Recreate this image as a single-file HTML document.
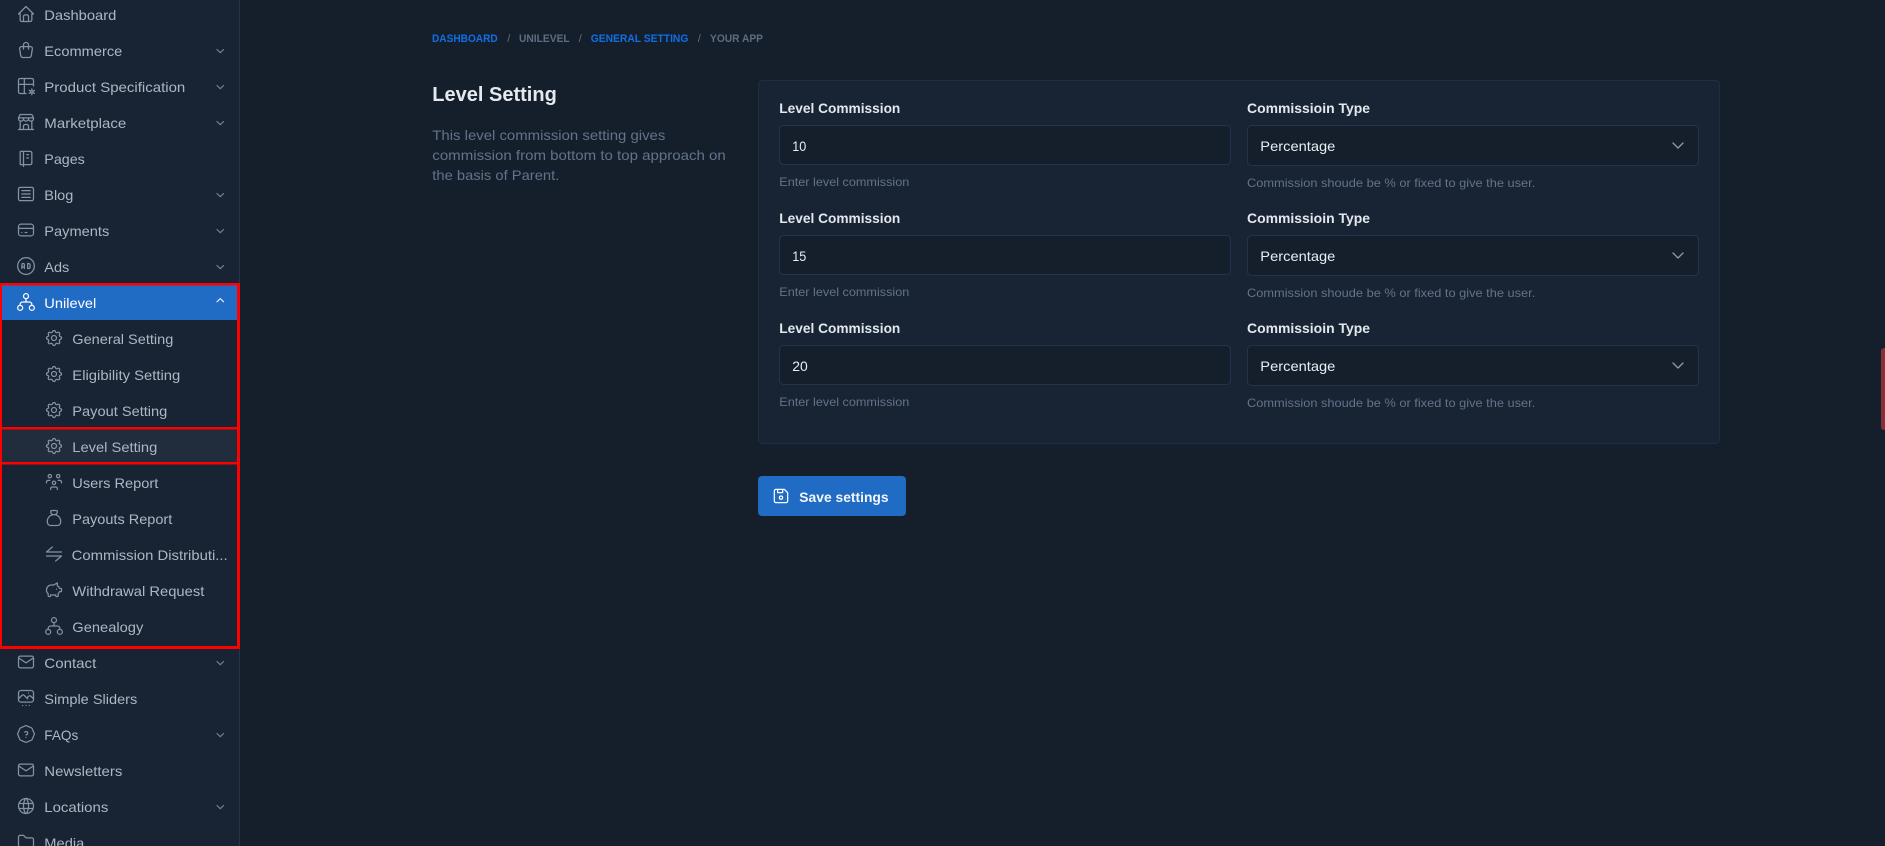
<!DOCTYPE html>
<html lang="en"><head><meta charset="utf-8"><title>Level Setting</title>
<style>
html,body{margin:0;padding:0;background:#151f2c;width:1885px;height:846px;overflow:hidden}
svg{display:block}
text{font-family:"Liberation Sans",sans-serif;white-space:pre}
.s{font-size:14px;fill:#adb7c3}
.w{fill:#fff}
.l{font-size:14px;font-weight:700;fill:#e2e8ee}
.h{font-size:12px;fill:#64728a}
.v{font-size:14px;fill:#e8edf3}
.d{font-size:14px;fill:#64728a}
.b{font-size:11px;font-weight:700}
.i{color:#8492a3}
.c{fill:none;stroke:#748296;stroke-width:1.2;stroke-linecap:round;stroke-linejoin:round}
symbol{fill:none;stroke:currentColor;stroke-width:1.5;stroke-linecap:round;stroke-linejoin:round;overflow:visible}
</style></head><body>
<svg xmlns="http://www.w3.org/2000/svg" width="1885" height="846" viewBox="0 0 1885 846">
<defs>
<symbol id="home" viewBox="0 0 24 24"><path d="M5 12l-2 0l9 -9l9 9l-2 0M5 12v7a2 2 0 0 0 2 2h10a2 2 0 0 0 2 -2v-7M9 21v-6a2 2 0 0 1 2 -2h2a2 2 0 0 1 2 2v6"/></symbol>
<symbol id="bag" viewBox="0 0 24 24"><path d="M6.331 8h11.339a2 2 0 0 1 1.977 2.304l-1.255 8.152a3 3 0 0 1 -2.966 2.544h-6.852a3 3 0 0 1 -2.965 -2.544l-1.255 -8.152a2 2 0 0 1 1.977 -2.304zM9 11v-5a3 3 0 0 1 6 0v5"/></symbol>
<symbol id="tbl" viewBox="0 0 24 24"><path d="M12 21h-7a2 2 0 0 1 -2 -2v-14a2 2 0 0 1 2 -2h14a2 2 0 0 1 2 2v7M3 10h18M10 3v18"/><circle cx="19" cy="19" r="1.4"/><path d="M19 15.5v1.6M19 20.9v1.6M15.9 17.2l1.5 .9M20.6 19.9l1.5 .9M15.9 20.8l1.5 -.9M20.6 18.1l1.5 -.9"/></symbol>
<symbol id="store" viewBox="0 0 24 24"><path d="M3 21l18 0M3 7v1a3 3 0 0 0 6 0v-1m0 1a3 3 0 0 0 6 0v-1m0 1a3 3 0 0 0 6 0v-1h-18l2 -4h14l2 4M5 21l0 -10.15M19 21l0 -10.15M9 21v-4a2 2 0 0 1 2 -2h2a2 2 0 0 1 2 2v4"/></symbol>
<symbol id="note" viewBox="0 0 24 24"><path d="M6 4h11a2 2 0 0 1 2 2v12a2 2 0 0 1 -2 2h-11a1 1 0 0 1 -1 -1v-14a1 1 0 0 1 1 -1m3 0v18M13 8l2 0M13 12l2 0"/></symbol>
<symbol id="art" viewBox="0 0 24 24"><path d="M3 6a2 2 0 0 1 2 -2h14a2 2 0 0 1 2 2v12a2 2 0 0 1 -2 2h-14a2 2 0 0 1 -2 -2zM7 8h10M7 12h10M7 16h10"/></symbol>
<symbol id="card" viewBox="0 0 24 24"><path d="M3 8a3 3 0 0 1 3 -3h12a3 3 0 0 1 3 3v8a3 3 0 0 1 -3 3h-12a3 3 0 0 1 -3 -3zM3 10h18M7 15h.01M11 15h2"/></symbol>
<symbol id="ad" viewBox="0 0 24 24"><circle cx="12" cy="12" r="10"/><path d="M7 15v-4.5a1.5 1.5 0 0 1 3 0v4.5M7 13h3M14 9v6h1a2 2 0 0 0 2 -2v-2a2 2 0 0 0 -2 -2h-1z"/></symbol>
<symbol id="hier" viewBox="0 0 24 24"><circle cx="12" cy="5" r="3"/><circle cx="5" cy="19" r="3"/><circle cx="19" cy="19" r="3"/><path d="M12 8v4M5 16v-1a3 3 0 0 1 3 -3h8a3 3 0 0 1 3 3v1"/></symbol>
<symbol id="gear" viewBox="0 0 24 24"><path d="M10.325 4.317c.426 -1.756 2.924 -1.756 3.35 0a1.724 1.724 0 0 0 2.573 1.066c1.543 -.94 3.31 .826 2.37 2.37a1.724 1.724 0 0 0 1.065 2.572c1.756 .426 1.756 2.924 0 3.35a1.724 1.724 0 0 0 -1.066 2.573c.94 1.543 -.826 3.31 -2.37 2.37a1.724 1.724 0 0 0 -2.572 1.065c-.426 1.756 -2.924 1.756 -3.35 0a1.724 1.724 0 0 0 -2.573 -1.066c-1.543 .94 -3.31 -.826 -2.37 -2.37a1.724 1.724 0 0 0 -1.065 -2.572c-1.756 -.426 -1.756 -2.924 0 -3.35a1.724 1.724 0 0 0 1.066 -2.573c-.94 -1.543 .826 -3.31 2.37 -2.37c1 .608 2.296 .07 2.572 -1.065zM9 12a3 3 0 1 0 6 0a3 3 0 0 0 -6 0"/></symbol>
<symbol id="users" viewBox="0 0 24 24"><path d="M10 13a2 2 0 1 0 4 0a2 2 0 0 0 -4 0M8 21v-1a2 2 0 0 1 2 -2h4a2 2 0 0 1 2 2v1M15 5a2 2 0 1 0 4 0a2 2 0 0 0 -4 0M17 10h2a2 2 0 0 1 2 2v1M5 5a2 2 0 1 0 4 0a2 2 0 0 0 -4 0M3 13v-1a2 2 0 0 1 2 -2h2"/></symbol>
<symbol id="money" viewBox="0 0 24 24"><path d="M9.5 3h5a1.5 1.5 0 0 1 1.5 1.5a3.5 3.5 0 0 1 -3.5 3.5h-1a3.5 3.5 0 0 1 -3.5 -3.5a1.5 1.5 0 0 1 1.5 -1.5zM4 17v-1a8 8 0 1 1 16 0v1a4 4 0 0 1 -4 4h-8a4 4 0 0 1 -4 -4z"/></symbol>
<symbol id="xch" viewBox="0 0 24 24"><path d="M21 9.6H3l7 -6M3 14.4h18l-7 6"/></symbol>
<symbol id="pig" viewBox="0 0 24 24"><path d="M15 11v.01M16 3.5v3.3a6 6 0 0 1 2.66 3.2h1.34a1 1 0 0 1 1 1v2a1 1 0 0 1 -1 1h-1.34a6 6 0 0 1 -1.66 2.47v2.03a1.5 1.5 0 0 1 -3 0v-.58a6 6 0 0 1 -1 .08h-4a6 6 0 0 1 -1 -.08v.58a1.5 1.5 0 0 1 -3 0v-2.03a6 6 0 0 1 4 -10.47h2.5z"/></symbol>
<symbol id="mail" viewBox="0 0 24 24"><path d="M3 7a2 2 0 0 1 2 -2h14a2 2 0 0 1 2 2v10a2 2 0 0 1 -2 2h-14a2 2 0 0 1 -2 -2v-10zM3 7l9 6l9 -6"/></symbol>
<symbol id="slide" viewBox="0 0 24 24"><path d="M15 6l.01 0M3 6a3 3 0 0 1 3 -3h12a3 3 0 0 1 3 3v8a3 3 0 0 1 -3 3h-12a3 3 0 0 1 -3 -3zM3 13l4 -4a3 5 0 0 1 3 0l4 4M13 12l2 -2a3 5 0 0 1 3 0l3 3M8 21l.01 0M12 21l.01 0M16 21l.01 0"/></symbol>
<symbol id="help" viewBox="0 0 24 24"><path d="M12.802 2.165l5.575 2.389c.48 .206 .863 .589 1.07 1.07l2.388 5.574c.22 .512 .22 1.092 0 1.604l-2.389 5.575c-.206 .48 -.589 .863 -1.07 1.07l-5.574 2.388c-.512 .22 -1.092 .22 -1.604 0l-5.575 -2.389a2.036 2.036 0 0 1 -1.07 -1.07l-2.388 -5.574a2.036 2.036 0 0 1 0 -1.604l2.389 -5.575c.206 -.48 .589 -.863 1.07 -1.07l5.574 -2.388a2.036 2.036 0 0 1 1.604 0zM12 16v.01M12 13a2 2 0 0 0 .914 -3.782a1.98 1.98 0 0 0 -2.414 .483"/></symbol>
<symbol id="world" viewBox="0 0 24 24"><path d="M3 12a9 9 0 1 0 18 0a9 9 0 0 0 -18 0M3.6 9h16.8M3.6 15h16.8M11.5 3a17 17 0 0 0 0 18M12.5 3a17 17 0 0 1 0 18"/></symbol>
<symbol id="folder" viewBox="0 0 24 24"><path d="M5 4h4l3 3h7a2 2 0 0 1 2 2v8a2 2 0 0 1 -2 2h-14a2 2 0 0 1 -2 -2v-11a2 2 0 0 1 2 -2"/></symbol>
<symbol id="floppy" viewBox="0 0 24 24"><path d="M6 4h10l4 4v10a2 2 0 0 1 -2 2h-12a2 2 0 0 1 -2 -2v-12a2 2 0 0 1 2 -2M10 14a2 2 0 1 0 4 0a2 2 0 1 0 -4 0M14 4l0 4l-6 0l0 -4"/></symbol>
</defs>

<rect width="1885" height="846" fill="#151f2c"/>

<!-- Sidebar -->
<rect x="0" y="0" width="239" height="846" fill="#182433"/>
<rect x="239" y="0" width="1" height="846" fill="#25344a"/>
<rect x="0" y="285" width="238" height="35" fill="#206bc4"/>
<rect x="0" y="429" width="238" height="34" fill="#212d3c"/>

<g class="i">
<use href="#home" x="16" y="4" width="20" height="20"/>
<use href="#bag" x="16" y="40" width="20" height="20"/>
<use href="#tbl" x="16" y="76" width="20" height="20"/>
<use href="#store" x="16" y="112" width="20" height="20"/>
<use href="#note" x="16" y="148" width="20" height="20"/>
<use href="#art" x="16" y="184" width="20" height="20"/>
<use href="#card" x="16" y="220" width="20" height="20"/>
<use href="#ad" x="16" y="256" width="20" height="20"/>
<use href="#hier" x="16" y="292" width="20" height="20" color="#ffffff"/>
<use href="#gear" x="44" y="328" width="20" height="20"/>
<use href="#gear" x="44" y="364" width="20" height="20"/>
<use href="#gear" x="44" y="400" width="20" height="20"/>
<use href="#gear" x="44" y="436" width="20" height="20"/>
<use href="#users" x="44" y="472" width="20" height="20"/>
<use href="#money" x="44" y="508" width="20" height="20"/>
<use href="#xch" x="44" y="544" width="20" height="20"/>
<use href="#pig" x="44" y="580" width="20" height="20"/>
<use href="#hier" x="44" y="616" width="20" height="20"/>
<use href="#mail" x="16" y="652" width="20" height="20"/>
<use href="#slide" x="16" y="688" width="20" height="20"/>
<use href="#help" x="16" y="724" width="20" height="20"/>
<use href="#mail" x="16" y="760" width="20" height="20"/>
<use href="#world" x="16" y="796" width="20" height="20"/>
<use href="#folder" x="16" y="832" width="20" height="20"/>
</g>

<g lengthAdjust="spacingAndGlyphs">
<text class="s" x="44.3" y="20" textLength="72" lengthAdjust="spacingAndGlyphs">Dashboard</text>
<text class="s" x="44.3" y="56" textLength="78" lengthAdjust="spacingAndGlyphs">Ecommerce</text>
<text class="s" x="44.3" y="92" textLength="141" lengthAdjust="spacingAndGlyphs">Product Specification</text>
<text class="s" x="44.3" y="128" textLength="82" lengthAdjust="spacingAndGlyphs">Marketplace</text>
<text class="s" x="44.3" y="164" textLength="40.5" lengthAdjust="spacingAndGlyphs">Pages</text>
<text class="s" x="44.3" y="200" textLength="29" lengthAdjust="spacingAndGlyphs">Blog</text>
<text class="s" x="44.3" y="236" textLength="65" lengthAdjust="spacingAndGlyphs">Payments</text>
<text class="s" x="44.3" y="272" textLength="25" lengthAdjust="spacingAndGlyphs">Ads</text>
<text class="s w" x="44.3" y="308" textLength="52" lengthAdjust="spacingAndGlyphs">Unilevel</text>
<text class="s" x="72.3" y="344" textLength="101" lengthAdjust="spacingAndGlyphs">General Setting</text>
<text class="s" x="72.3" y="380" textLength="108" lengthAdjust="spacingAndGlyphs">Eligibility Setting</text>
<text class="s" x="72.3" y="416" textLength="95" lengthAdjust="spacingAndGlyphs">Payout Setting</text>
<text class="s" x="72.3" y="452" textLength="85" lengthAdjust="spacingAndGlyphs">Level Setting</text>
<text class="s" x="72.3" y="488" textLength="86" lengthAdjust="spacingAndGlyphs">Users Report</text>
<text class="s" x="72.3" y="524" textLength="100" lengthAdjust="spacingAndGlyphs">Payouts Report</text>
<text class="s" x="71.7" y="560" textLength="156" lengthAdjust="spacingAndGlyphs">Commission Distributi...</text>
<text class="s" x="72.3" y="596" textLength="132" lengthAdjust="spacingAndGlyphs">Withdrawal Request</text>
<text class="s" x="72.3" y="632" textLength="71" lengthAdjust="spacingAndGlyphs">Genealogy</text>
<text class="s" x="44.3" y="668" textLength="52" lengthAdjust="spacingAndGlyphs">Contact</text>
<text class="s" x="44.3" y="704" textLength="93" lengthAdjust="spacingAndGlyphs">Simple Sliders</text>
<text class="s" x="44.3" y="740" textLength="34" lengthAdjust="spacingAndGlyphs">FAQs</text>
<text class="s" x="44.3" y="776" textLength="78" lengthAdjust="spacingAndGlyphs">Newsletters</text>
<text class="s" x="44.3" y="812" textLength="64" lengthAdjust="spacingAndGlyphs">Locations</text>
<text class="s" x="44.3" y="848" textLength="40" lengthAdjust="spacingAndGlyphs">Media</text>
</g>

<g class="c">
<path d="M217 49.5l3.3 3.2l3.3 -3.2"/>
<path d="M217 85.5l3.3 3.2l3.3 -3.2"/>
<path d="M217 121.5l3.3 3.2l3.3 -3.2"/>
<path d="M217 193.5l3.3 3.2l3.3 -3.2"/>
<path d="M217 229.5l3.3 3.2l3.3 -3.2"/>
<path d="M217 265.5l3.3 3.2l3.3 -3.2"/>
<path d="M217 301.8l3.3 -3.2l3.3 3.2" style="stroke:#dfe8f5"/>
<path d="M217 661.5l3.3 3.2l3.3 -3.2"/>
<path d="M217 733.5l3.3 3.2l3.3 -3.2"/>
<path d="M217 805.5l3.3 3.2l3.3 -3.2"/>
</g>

<!-- Red annotation boxes -->
<g fill="#fe0000">
<rect x="0" y="283" width="240" height="2.5"/>
<rect x="0" y="427" width="240" height="2.5"/>
<rect x="0" y="462" width="240" height="2.5"/>
<rect x="0" y="646" width="240" height="3"/>
<rect x="0" y="283" width="2" height="366"/>
<rect x="237" y="283" width="3" height="366"/>
</g>

<!-- Breadcrumb -->
<text class="b" x="432" y="42" textLength="65.7" lengthAdjust="spacingAndGlyphs" fill="#0f6fe6">DASHBOARD</text>
<text class="b" x="507.2" y="42" fill="#5f6c80" style="font-weight:400">/</text>
<text class="b" x="519" y="42" textLength="50.7" lengthAdjust="spacingAndGlyphs" fill="#5f6c80">UNILEVEL</text>
<text class="b" x="578.8" y="42" fill="#5f6c80" style="font-weight:400">/</text>
<text class="b" x="590.7" y="42" textLength="97.7" lengthAdjust="spacingAndGlyphs" fill="#0f6fe6">GENERAL SETTING</text>
<text class="b" x="697.8" y="42" fill="#5f6c80" style="font-weight:400">/</text>
<text class="b" x="710" y="42" textLength="53" lengthAdjust="spacingAndGlyphs" fill="#5f6c80">YOUR APP</text>

<!-- Heading -->
<text x="432.3" y="101" textLength="124.5" lengthAdjust="spacingAndGlyphs" style="font-size:20px;font-weight:700;fill:#e6eaf0">Level Setting</text>
<text class="d" x="432.3" y="140" textLength="233" lengthAdjust="spacingAndGlyphs">This level commission setting gives</text>
<text class="d" x="432.3" y="160" textLength="293.5" lengthAdjust="spacingAndGlyphs">commission from bottom to top approach on</text>
<text class="d" x="432.3" y="180" textLength="127" lengthAdjust="spacingAndGlyphs">the basis of Parent.</text>

<!-- Card -->
<rect x="758.5" y="80.5" width="961" height="363" rx="4" fill="#182433" stroke="#1f2e42"/>

<g fill="#151f2c" stroke="#22344c">
<rect x="779.5" y="125.5" width="451" height="39" rx="4"/>
<rect x="779.5" y="235.5" width="451" height="39" rx="4"/>
<rect x="779.5" y="345.5" width="451" height="39" rx="4"/>
<rect x="1247.5" y="125.5" width="451" height="40" rx="4"/>
<rect x="1247.5" y="235.5" width="451" height="40" rx="4"/>
<rect x="1247.5" y="345.5" width="451" height="40" rx="4"/>
</g>

<text class="l" x="779.3" y="113" textLength="121" lengthAdjust="spacingAndGlyphs">Level Commission</text>
<text class="l" x="779.3" y="223" textLength="121" lengthAdjust="spacingAndGlyphs">Level Commission</text>
<text class="l" x="779.3" y="333" textLength="121" lengthAdjust="spacingAndGlyphs">Level Commission</text>
<text class="l" x="1247" y="113" textLength="123" lengthAdjust="spacingAndGlyphs">Commissioin Type</text>
<text class="l" x="1247" y="223" textLength="123" lengthAdjust="spacingAndGlyphs">Commissioin Type</text>
<text class="l" x="1247" y="333" textLength="123" lengthAdjust="spacingAndGlyphs">Commissioin Type</text>

<text class="v" x="792.3" y="151" textLength="14" lengthAdjust="spacingAndGlyphs">10</text>
<text class="v" x="792.3" y="261" textLength="14" lengthAdjust="spacingAndGlyphs">15</text>
<text class="v" x="792.3" y="371" textLength="15.5" lengthAdjust="spacingAndGlyphs">20</text>
<text class="v" x="1260.3" y="151" textLength="75" lengthAdjust="spacingAndGlyphs">Percentage</text>
<text class="v" x="1260.3" y="261" textLength="75" lengthAdjust="spacingAndGlyphs">Percentage</text>
<text class="v" x="1260.3" y="371" textLength="75" lengthAdjust="spacingAndGlyphs">Percentage</text>

<text class="h" x="779.3" y="186" textLength="130" lengthAdjust="spacingAndGlyphs">Enter level commission</text>
<text class="h" x="779.3" y="296" textLength="130" lengthAdjust="spacingAndGlyphs">Enter level commission</text>
<text class="h" x="779.3" y="406" textLength="130" lengthAdjust="spacingAndGlyphs">Enter level commission</text>
<text class="h" x="1247" y="187" textLength="288.3" lengthAdjust="spacingAndGlyphs">Commission shoude be % or fixed to give the user.</text>
<text class="h" x="1247" y="297" textLength="288.3" lengthAdjust="spacingAndGlyphs">Commission shoude be % or fixed to give the user.</text>
<text class="h" x="1247" y="407" textLength="288.3" lengthAdjust="spacingAndGlyphs">Commission shoude be % or fixed to give the user.</text>

<g fill="none" stroke="#8f9bab" stroke-width="1.3" stroke-linecap="round" stroke-linejoin="round">
<path d="M1673 143l5 5l5 -5"/>
<path d="M1673 253l5 5l5 -5"/>
<path d="M1673 363l5 5l5 -5"/>
</g>

<!-- Button -->
<rect x="758" y="476" width="148" height="40" rx="4" fill="#206bc4"/>
<use href="#floppy" x="771" y="486" width="20" height="20" color="#ffffff"/>
<text x="799.3" y="502" textLength="89.3" lengthAdjust="spacingAndGlyphs" style="font-size:14px;font-weight:700;fill:#f3f7fc">Save settings</text>

<!-- Right edge tab -->
<path d="M1885 348h-1a3 3 0 0 0 -3 3v76a3 3 0 0 0 3 3h1z" fill="#8a2d3a"/>
</svg>
</body></html>
